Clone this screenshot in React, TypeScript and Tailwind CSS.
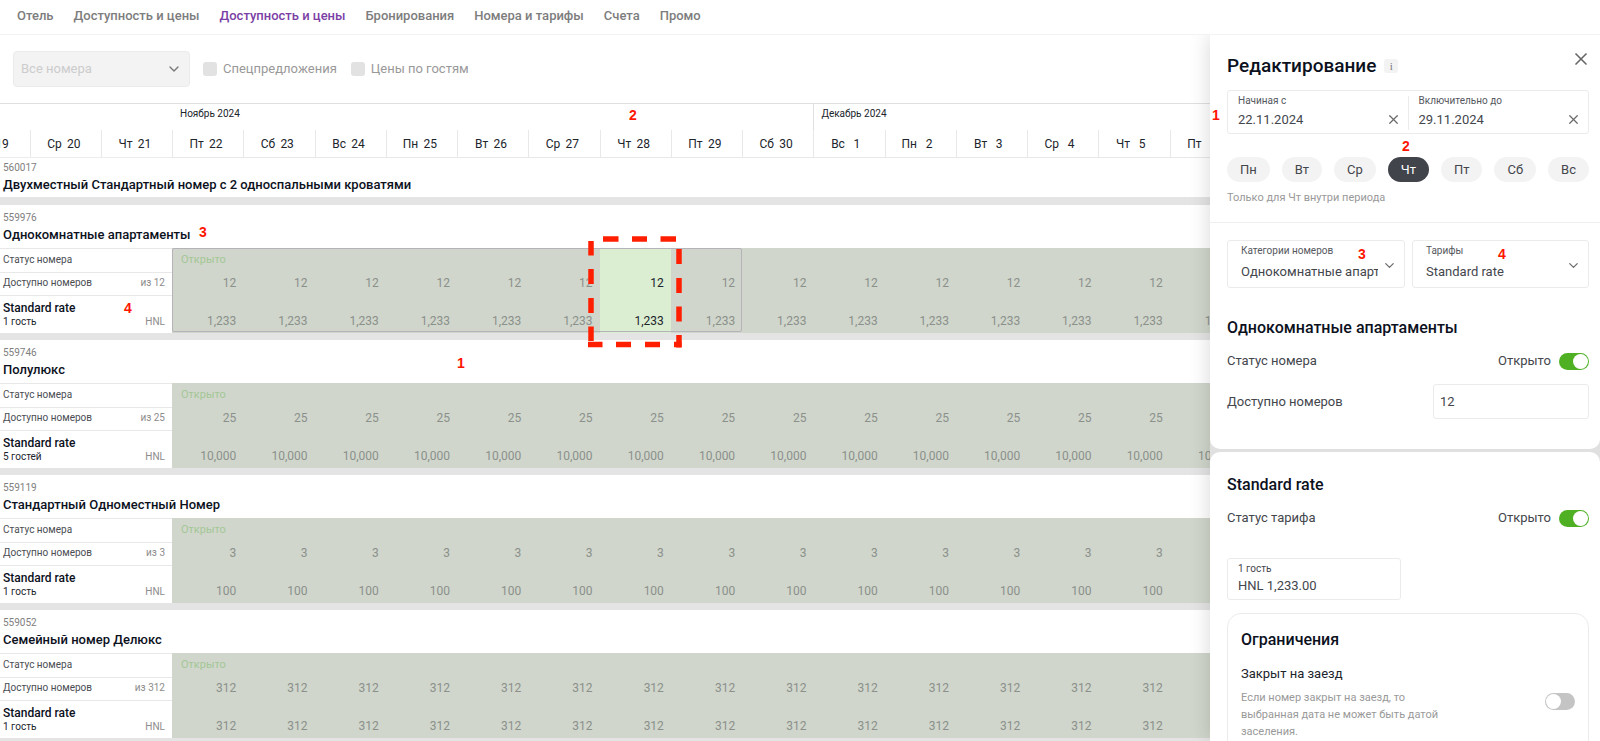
import { useState } from "react";
import { ChevronDown, X } from "lucide-react";

type Room = {
  id: string;
  name: string;
  available: string;
  price: string;
  guests: string;
  selected?: boolean;
};

const NAV = ["Отель", "Доступность и цены", "Доступность и цены", "Бронирования", "Номера и тарифы", "Счета", "Промо"];

const PREV_DAYS = [["Вт", "19"], ["Ср", "20"], ["Чт", "21"]];

const WEEKDAYS = ["Пн", "Вт", "Ср", "Чт", "Пт", "Сб", "Вс"];

// 15 visible days starting from Friday, November 22
const DAYS = Array.from({ length: 15 }, (_, i) => ({
  weekday: WEEKDAYS[(i + 4) % 7],
  date: i < 9 ? 22 + i : i - 8,
}));

const ACTIVE_DAY = 6;

const ROOMS: Room[] = [
  { id: "559976", name: "Однокомнатные апартаменты", available: "12", price: "1,233", guests: "1 гость", selected: true },
  { id: "559746", name: "Полулюкс", available: "25", price: "10,000", guests: "5 гостей" },
  { id: "559119", name: "Стандартный Одноместный Номер", available: "3", price: "100", guests: "1 гость" },
  { id: "559052", name: "Семейный номер Делюкс", available: "312", price: "312", guests: "1 гость" },
];

function Mark({ n, className }: { n: number; className: string }) {
  return (
    <span className={`absolute z-20 font-['Liberation_Sans',sans-serif] text-sm leading-4 font-bold text-[#ff1500] ${className}`}>{n}</span>
  );
}

function DashedFrame() {
  return (
    <svg className="pointer-events-none absolute -top-3 -left-3 z-10 max-w-none" width="94" height="112" viewBox="0 0 94 112" fill="none" stroke="#ff1f00" strokeWidth="5.5">
      <path d="M15 3h15.5M44 3h15M72.500 3h15.500" />
      <path d="M91 13v15M91 42v15M91 70.500v15M91 99v12.500" />
      <path d="M3 5v14.500M3 33v15M3 62v15M3 90.500v14.500" />
      <path d="M0 108.500h14.500M28 108.500h15M57 108.500h15M86 108.500h7.500" />
    </svg>
  );
}

function DayLabel({ weekday, date }: { weekday: string; date: string | number }) {
  return (
    <span className="inline-flex gap-1 pr-[3px]">
      <span>{weekday}</span>
      <span className="w-4 text-center">{date}</span>
    </span>
  );
}

function Toggle({ label, defaultChecked }: { label: string; defaultChecked?: boolean }) {
  return (
    <input
      type="checkbox"
      role="switch"
      aria-label={label}
      defaultChecked={defaultChecked}
      className="h-[17px] w-[30px] shrink-0 appearance-none rounded-full bg-[#c4c4c4] p-px before:block before:size-[15px] before:rounded-full before:bg-white checked:bg-[#4fb023] checked:before:ml-[13px]"
    />
  );
}

function RoomRows({ room }: { room: Room }) {
  const cell = (i: number) =>
    room.selected && i === ACTIVE_DAY ? "bg-[#dbeed2] text-[#20242b]" : "bg-[#d0d6cb] text-[#8b908b]";
  const side = "border-t border-[#e8e8e8] bg-white pr-[7px] pl-[3px]";

  return (
    <tbody>
      <tr className="h-[43px]">
        <th colSpan={16} scope="rowgroup" className="pt-[6px] pb-[3px] pl-[3px] text-left font-normal">
          <div className="text-[10px] leading-[14px] text-[#808080]">{room.id}</div>
          <div className="text-[13px] leading-5 font-medium text-[#0c111d]">{room.name}</div>
        </th>
      </tr>
      <tr className="h-6">
        <th scope="row" className={`${side} pb-[3px] text-left text-[10px] font-normal text-[#4a4d52]`}>Статус номера</th>
        {DAYS.map((_, i) => (
          <td key={i} className={`relative pl-[9px] text-[11px] ${cell(i)}`}>
            {i === 0 && <span className="text-[#a3c796]">Открыто</span>}
            {i === 0 && room.selected && (
              <div className="pointer-events-none absolute top-0 left-0 z-10 h-[84px] w-[800%] rounded-[2px] border border-[#b5b2ba]" />
            )}
            {i === ACTIVE_DAY && room.selected && <DashedFrame />}
          </td>
        ))}
      </tr>
      <tr className="h-[23px]">
        <th scope="row" className={`${side} pb-[3px] font-normal`}>
          <div className="flex justify-between text-[10px] text-[#4a4d52]">
            <span>Доступно номеров</span>
            <span className="text-[#8c8c8c]">из {room.available}</span>
          </div>
        </th>
        {DAYS.map((_, i) => (
          <td key={i} className={`pr-[7px] pb-px text-right text-xs ${cell(i)}`}>{room.available}</td>
        ))}
      </tr>
      <tr className="h-[38px]">
        <th scope="row" className={`${side} pb-px text-left font-normal`}>
          <div className="text-xs leading-4 font-medium text-[#0c111d]">Standard rate</div>
          <div className="flex justify-between text-[10px] leading-3 text-[#20242b]">
            <span>{room.guests}</span>
            <span className="text-[#8c8c8c]">HNL</span>
          </div>
        </th>
        {DAYS.map((_, i) => (
          <td key={i} className={`pr-[7px] pb-1 text-right align-bottom text-xs ${cell(i)}`}>{room.price}</td>
        ))}
      </tr>
      <tr className="h-[7px]">
        <td colSpan={16} className="bg-[#e4e4e4]" />
      </tr>
    </tbody>
  );
}

function Calendar() {
  return (
    <table className="w-[calc(100%-359px)] table-fixed border-separate border-spacing-0">
      <colgroup>
        <col className="w-[172px]" />
        {DAYS.map((_, i) => <col key={i} />)}
      </colgroup>
      <thead className="text-[#20242b]">
        <tr className="h-[27px] text-left align-top text-[10px]">
          <td className="border-t border-[#e0e0e0]" />
          <th colSpan={9} className="border-t border-[#e0e0e0] pt-[2px] pl-2 font-normal">Ноябрь 2024</th>
          <th colSpan={6} className="border-t border-l border-[#e0e0e0] pt-[2px] pl-[7px] font-normal">Декабрь 2024</th>
        </tr>
        <tr className="h-7 text-xs">
          <td className="overflow-hidden border-b border-[#ececec] p-0">
            <div className="flex h-[27px] justify-end">
              {PREV_DAYS.map(([weekday, date]) => (
                <div key={date} className="flex w-[71px] shrink-0 items-center justify-center border-l border-[#e8e8e8]">
                  <DayLabel weekday={weekday} date={date} />
                </div>
              ))}
            </div>
          </td>
          {DAYS.map((d) => (
            <th key={d.date} scope="col" className="border-b border-l border-[#e8e8e8] p-0 font-normal">
              <DayLabel weekday={d.weekday} date={d.date} />
            </th>
          ))}
        </tr>
      </thead>
      <tbody>
        <tr className="h-[39px]">
          <th colSpan={16} scope="rowgroup" className="pt-[3px] pb-[2px] pl-[3px] text-left font-normal">
            <div className="text-[10px] leading-[14px] text-[#808080]">560017</div>
            <div className="text-[13px] leading-5 font-medium text-[#0c111d]">Двухместный Стандартный номер с 2 односпальными кроватями</div>
          </th>
        </tr>
        <tr className="h-2">
          <td colSpan={16} className="bg-[#e4e4e4]" />
        </tr>
      </tbody>
      {ROOMS.map((room) => <RoomRows key={room.id} room={room} />)}
    </table>
  );
}

function DateField({ label, value }: { label: string; value: string }) {
  const [date, setDate] = useState(value);
  return (
    <div className="flex flex-1 items-end pr-[7px] pl-[10px]">
      <label className="min-w-0 flex-1 text-[10px] leading-3 text-[#55585e]">
        {label}
        <input value={date} onChange={(e) => setDate(e.target.value)} className="mt-[3px] block w-full text-[13px] leading-5 text-[#43464c] outline-none" />
      </label>
      <button aria-label="Очистить" onClick={() => setDate("")} className="pb-[3px] text-[#6b6b6b]">
        <X size={15} />
      </button>
    </div>
  );
}

function SelectField({ label, value, className }: { label: string; value: string; className: string }) {
  return (
    <label className={`relative block h-12 rounded-[3px] border border-[#ebebeb] pt-[4px] pl-[13px] text-[10px] leading-3 text-[#55585e] ${className}`}>
      {label}
      <select className="mt-[5px] block w-full appearance-none pr-[26px] text-[13px] leading-5 text-[#43464c] outline-none">
        <option>{value}</option>
      </select>
      <ChevronDown size={15} className="absolute top-[17px] right-[7px] text-[#6b6b6b]" />
    </label>
  );
}

function EditPanel() {
  const [days, setDays] = useState(["Чт"]);
  const toggleDay = (d: string) => setDays(days.includes(d) ? days.filter((x) => x !== d) : [...days, d]);

  return (
    <aside className="absolute inset-y-0 right-0 z-20 flex w-[390px] flex-col gap-[3px] bg-[#e0e0e0] text-[13px] text-[#43464c] shadow-[0_0_20px_rgba(0,0,0,0.16)]">
      <section className="rounded-b-[10px] bg-white pb-[30px]">
        <div className="flex items-start justify-between pt-[14px] pr-[9px] pl-[17px]">
          <div className="flex items-center gap-2 pt-[3px]">
            <h2 className="text-[19px] leading-7 font-medium text-[#0c111d]">Редактирование</h2>
            <button aria-label="Информация" className="size-[14px] rounded-[3px] bg-[#f3f3f3] font-['Liberation_Serif',serif] text-[11px] leading-[14px] text-[#777]">i</button>
          </div>
          <button aria-label="Закрыть" className="text-[#666]">
            <X size={20} strokeWidth={2} />
          </button>
        </div>

        <div className="mt-[10px] mr-[11px] ml-[17px] flex h-11 rounded-[3px] border border-[#ebebeb] pt-[5px] pb-[3px]">
          <DateField label="Начиная с" value="22.11.2024" />
          <div className="w-px bg-[#ebebeb]" />
          <DateField label="Включительно до" value="29.11.2024" />
        </div>

        <div className="mt-[23px] mr-[11px] ml-[17px] flex justify-between">
          {WEEKDAYS.map((d) => (
            <button
              key={d}
              onClick={() => toggleDay(d)}
              className={`h-[25px] rounded-full px-[13px] ${days.includes(d) ? "bg-[#41444b] text-white" : "bg-[#f3f3f3]"}`}
            >
              {d}
            </button>
          ))}
        </div>
        <p className="mt-2 pl-[17px] text-[11px] leading-4 text-[#999]">Только для Чт внутри периода</p>

        <div className="mt-4 flex gap-[7px] border-t border-[#efefef] pt-[17px] pr-[11px] pl-[17px]">
          <SelectField label="Категории номеров" value="Однокомнатные апартаменты" className="w-[178px]" />
          <SelectField label="Тарифы" value="Standard rate" className="flex-1" />
        </div>

        <div className="pr-[11px] pl-[17px]">
          <h3 className="mt-[28px] text-base leading-6 font-medium text-[#0c111d]">Однокомнатные апартаменты</h3>
          <div className="mt-[11px] flex h-5 items-center gap-2">
            <span className="flex-1">Статус номера</span>
            <span>Открыто</span>
            <Toggle label="Статус номера" defaultChecked />
          </div>
          <div className="mt-[13px] flex items-center justify-between">
            <label htmlFor="available">Доступно номеров</label>
            <input id="available" defaultValue="12" className="h-[35px] w-[156px] rounded-[3px] border border-[#ebebeb] px-[6px] outline-none" />
          </div>
        </div>
      </section>

      <section className="flex-1 overflow-hidden rounded-t-[10px] bg-white pt-[21px] pr-[11px] pl-[17px]">
        <h3 className="text-base leading-6 font-medium text-[#0c111d]">Standard rate</h3>
        <div className="mt-[11px] flex h-5 items-center gap-2">
          <span className="flex-1">Статус тарифа</span>
          <span>Открыто</span>
          <Toggle label="Статус тарифа" defaultChecked />
        </div>

        <label className="mt-[30px] block h-[42px] w-[174px] rounded-[3px] border border-[#ebebeb] pt-1 pl-[10px] text-[10px] leading-3 text-[#43464c]">
          1 гость
          <input defaultValue="HNL 1,233.00" className="mt-px block w-full text-[13px] leading-5 outline-none" />
        </label>

        <div className="mt-[13px] rounded-[14px] border border-[#ebebeb] px-[13px] pt-[14px] pb-5">
          <h3 className="text-base leading-6 font-medium text-[#0c111d]">Ограничения</h3>
          <div className="mt-[12px] leading-5 text-[#20242b]">Закрыт на заезд</div>
          <div className="mt-[5px] flex items-start justify-between">
            <p className="w-[220px] text-[11px] leading-[17px] text-[#999]">
              Если номер закрыт на заезд, то выбранная дата не может быть датой заселения.
            </p>
            <div className="flex pt-1">
              <Toggle label="Закрыт на заезд" />
            </div>
          </div>
        </div>
      </section>

      <Mark n={1} className="top-[72px] left-[2px]" />
      <Mark n={2} className="top-[103px] left-[192px]" />
      <Mark n={3} className="top-[211px] left-[148px]" />
      <Mark n={4} className="top-[211px] left-[288px]" />
    </aside>
  );
}

export default function App() {
  return (
    <div className="flex h-screen flex-col overflow-hidden bg-white font-[Roboto,sans-serif]">
      <nav className="flex h-[35px] shrink-0 gap-5 border-b border-[#f3f3f3] pt-[6px] pl-[17px] text-[13px] leading-5 font-medium text-[#7d7d7d]">
        {NAV.map((item, i) => (
          <a key={i} href="#" className={i === 2 ? "text-[#7b3fa5]" : ""}>{item}</a>
        ))}
      </nav>

      <main className="relative min-h-0 flex-1 overflow-hidden">
        <div className="flex h-[68px] items-center pl-[13px] text-[13px] text-[#999]">
          <div className="relative">
            <select disabled aria-label="Номера" className="h-[36px] w-[177px] appearance-none rounded-[4px] border border-[#ebebeb] bg-[#f3f3f3] px-[7px] text-[#ccc] opacity-100">
              <option>Все номера</option>
            </select>
            <ChevronDown size={16} className="absolute top-[10px] right-[8px] text-[#777]" />
          </div>
          <label className="ml-[13px] flex items-center gap-[6px]">
            <input type="checkbox" disabled className="size-[14px] appearance-none rounded-[3px] bg-[#e2e2e2]" />
            Спецпредложения
          </label>
          <label className="ml-[14px] flex items-center gap-[6px]">
            <input type="checkbox" disabled className="size-[14px] appearance-none rounded-[3px] bg-[#e2e2e2]" />
            Цены по гостям
          </label>
        </div>

        <Calendar />

        <Mark n={2} className="top-[72px] left-[629px]" />
        <Mark n={3} className="top-[189px] left-[199px]" />
        <Mark n={4} className="top-[265px] left-[124px]" />
        <Mark n={1} className="top-[320px] left-[457px]" />

        <EditPanel />
      </main>
    </div>
  );
}
